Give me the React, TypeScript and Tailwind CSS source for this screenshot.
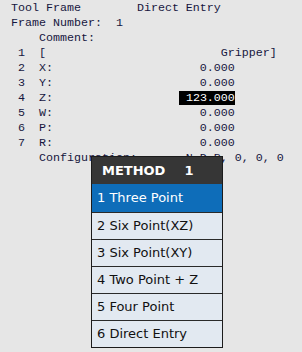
import React from "react";

const pad = (s: string, col: number) => s + " ".repeat(Math.max(0, col - s.length));

const LINES = [
  pad("Tool Frame", 18) + "Direct Entry",
  "Frame Number:  1",
  "    Comment:",
  pad(" 1  [", 30) + "Gripper]",
  pad(" 2  X:", 27) + "0.000",
  pad(" 3  Y:", 27) + "0.000",
  null, // Z row, highlighted
  pad(" 5  W:", 27) + "0.000",
  pad(" 6  P:", 27) + "0.000",
  pad(" 7  R:", 27) + "0.000",
  pad("    Configuration:", 25) + "N D B, 0, 0, 0",
];

const METHODS = [
  "1 Three Point",
  "2 Six Point(XZ)",
  "3 Six Point(XY)",
  "4 Two Point + Z",
  "5 Four Point",
  "6 Direct Entry",
];

const App: React.FC = () => {
  return (
    <div className="relative w-[302px] h-[352px] bg-[#e6e6e6] overflow-hidden">
      <div className="pl-[11px] pt-[1px] text-[11.67px] leading-[15px] text-[#161640] font-['Liberation_Mono',monospace]">
        {LINES.map((line, i) =>
          line === null ? (
            <div key={i} className="whitespace-pre">
              {pad(" 4  Z:", 24)}
              <span className="bg-black text-white">{" 123.000"}</span>
            </div>
          ) : (
            <div key={i} className="whitespace-pre">
              {line}
            </div>
          )
        )}
      </div>

      {/* method popup */}
      <div className="absolute left-[91px] top-[156px] w-[132px] border border-[#1c1c1c] bg-[#e2e9f1] font-['DejaVu_Sans',sans-serif]">
        <div className="h-[27px] bg-[#363636] flex items-center pl-[10px] text-white font-bold text-[13px]">
          <span>METHOD</span>
          <span className="ml-[19px]">1</span>
        </div>
        {METHODS.map((m, i) => (
          <div
            key={m}
            className={`h-[27px] flex items-center pl-[5px] text-[13px] border-t border-[#2a2a2a] ${
              i === 0 ? "bg-[#0e6db9] text-white border-t-0 h-[28px]" : "text-[#111]"
            }`}
          >
            {m}
          </div>
        ))}
      </div>
    </div>
  );
};

export default App;
